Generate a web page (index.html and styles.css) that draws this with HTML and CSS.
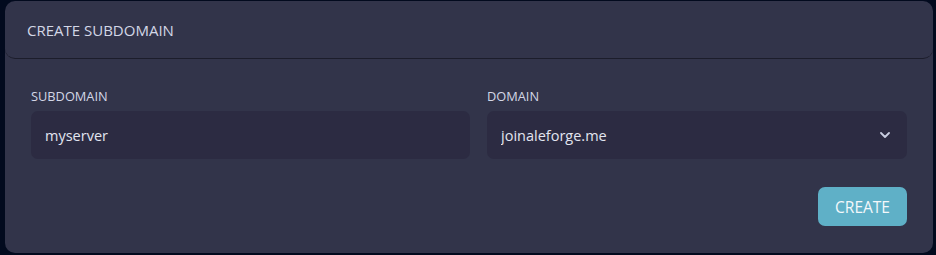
FILE: index.html
```html
<!DOCTYPE html>
<html lang="en">
<head>
    <meta charset="UTF-8">
    <meta name="viewport" content="width=device-width, initial-scale=1.0">
    <title>Create Subdomain</title>
    <link rel="stylesheet" href="styles.css">
</head>
<body>

<div class="card">
    <div class="card-header">CREATE SUBDOMAIN</div>

    <form class="card-body" id="subdomainForm">
        <div class="fields">
            <div class="field">
                <label for="subdomain">SUBDOMAIN</label>
                <input type="text" id="subdomain" name="subdomain" value="myserver">
            </div>
            <div class="field">
                <label for="domain">DOMAIN</label>
                <div class="select-wrap">
                    <select id="domain" name="domain">
                        <option>joinaleforge.me</option>
                    </select>
                    <svg class="chevron" width="10" height="6" viewBox="0 0 10 6">
                        <path d="M1 1 L5 5 L9 1" fill="none" stroke="#c9cde0" stroke-width="1.8" stroke-linecap="round" stroke-linejoin="round"/>
                    </svg>
                </div>
            </div>
        </div>

        <div class="actions">
            <button type="submit">CREATE</button>
        </div>
    </form>
</div>

</body>
</html>
```

FILE: styles.css
```css
/* Basic Styles */
body {
    font-family: "Open Sans", Arial, sans-serif;
    background-color: #020a1e;
    margin: 0;
    padding: 1px 3px 3px 5px;
}

.card {
    background-color: #32344a;
    border-radius: 10px;
    height: 252px;
}

.card-header {
    height: 57px;
    border-bottom: 1px solid #1c1d2b;
    border-radius: 10px;
    padding-left: 22px;
    display: flex;
    align-items: center;
    color: #d3d7e6;
    font-size: 15px;
}

.card-body {
    padding: 29px 26px 0 26px;
}

.fields {
    display: grid;
    grid-template-columns: 439px 1fr;
    gap: 17px;
}

.field label {
    display: block;
    color: #d3d7e6;
    font-size: 12.8px;
    line-height: 16px;
    margin-bottom: 7px;
}

.field input, .field select {
    width: 100%;
    box-sizing: border-box;
    height: 48px;
    background-color: #2c2b42;
    border: none;
    border-radius: 7px;
    color: #e2e5f0;
    font-family: inherit;
    font-size: 14.5px;
    padding: 0 14px;
    outline: none;
    appearance: none;
}

.select-wrap {
    position: relative;
}

.chevron {
    position: absolute;
    right: 17px;
    top: 21px;
}

.actions {
    display: flex;
    justify-content: flex-end;
    margin-top: 28px;
}

button {
    background-color: #5fb0c7;
    color: #f4f8fb;
    border: none;
    border-radius: 7px;
    width: 89px;
    height: 39px;
    font-family: inherit;
    font-size: 15.5px;
    cursor: pointer;
}
```
